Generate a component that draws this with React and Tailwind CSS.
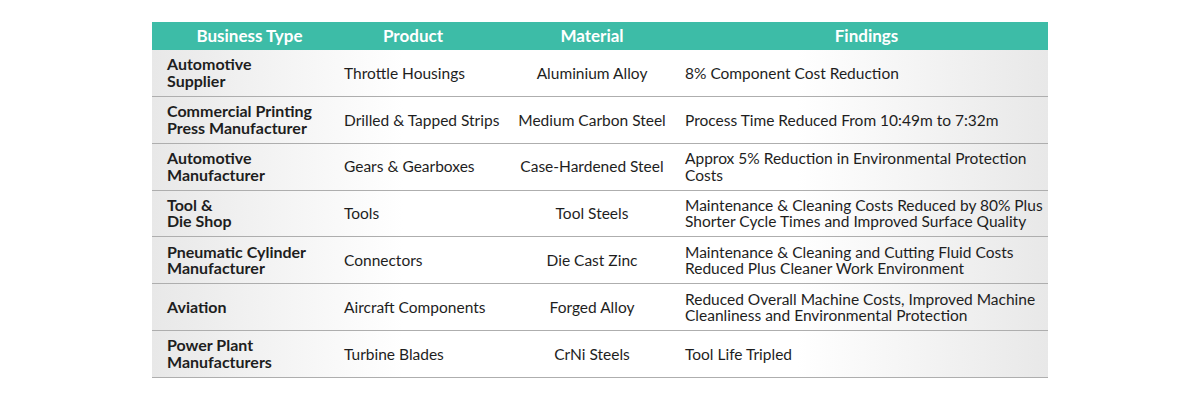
import React from "react";

const rows = [
  ["Automotive\nSupplier", "Throttle Housings", "Aluminium Alloy", "8% Component Cost Reduction"],
  ["Commercial Printing\nPress Manufacturer", "Drilled & Tapped Strips", "Medium Carbon Steel", "Process Time Reduced From 10:49m to 7:32m"],
  ["Automotive\nManufacturer", "Gears & Gearboxes", "Case-Hardened Steel", "Approx 5% Reduction in Environmental Protection\nCosts"],
  ["Tool &\nDie Shop", "Tools", "Tool Steels", "Maintenance & Cleaning Costs Reduced by 80% Plus\nShorter Cycle Times and Improved Surface Quality"],
  ["Pneumatic Cylinder\nManufacturer", "Connectors", "Die Cast Zinc", "Maintenance & Cleaning and Cutting Fluid Costs\nReduced Plus Cleaner Work Environment"],
  ["Aviation", "Aircraft Components", "Forged Alloy", "Reduced Overall Machine Costs, Improved Machine\nCleanliness and Environmental Protection"],
  ["Power Plant\nManufacturers", "Turbine Blades", "CrNi Steels", "Tool Life Tripled"],
];

const grid = "grid grid-cols-[180px_162px_184px_370px]";

export default function App() {
  return (
    <div className="w-[1200px] h-[400px] bg-white pt-[22px] pl-[152px]" style={{ fontFamily: "Lato, 'Liberation Sans', sans-serif" }}>
      <div className="w-[896px]">
        <div className={`${grid} h-[28px] items-center bg-[#3dbca7] text-white font-bold text-[17px]`}>
          <div className="pl-[15px] text-center">Business Type</div>
          <div className="pl-[12px] pr-[12px] text-center">Product</div>
          <div className="pl-[12px] text-center">Material</div>
          <div className="pl-[7px] text-center">Findings</div>
        </div>
        {rows.map((r, i) => (
          <div
            key={i}
            className={`${grid} h-[46.85px] items-center border-b border-[#aeaeae] bg-[linear-gradient(90deg,#e8e8e8_0%,#ffffff_28%,#ffffff_72%,#e8e8e8_100%)] text-[15.5px] leading-[16.5px] text-[#1e1e1e] whitespace-nowrap`}
          >
            <div className="pl-[15px] font-bold text-[16px] whitespace-pre-line">{r[0]}</div>
            <div className="pl-[12px]">{r[1]}</div>
            <div className="pl-[12px] text-center">{r[2]}</div>
            <div className="pl-[7px] whitespace-pre-line">{r[3]}</div>
          </div>
        ))}
      </div>
    </div>
  );
}
